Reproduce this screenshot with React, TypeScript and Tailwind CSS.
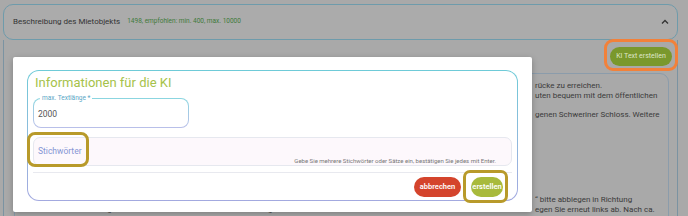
import React from "react";

function PanelLine({ hidden, visible }: { hidden: string; visible: string }) {
  return (
    <div className="whitespace-nowrap h-[9.5px] leading-[9.5px]">
      <span className="inline-block w-[511px] overflow-hidden align-top">{hidden}</span>
      {visible}
    </div>
  );
}

function KiModal() {
  return (
    <div className="absolute left-[13px] top-[57px] w-[519px] h-[155px] bg-white rounded-[2px] shadow-[0_2px_6px_rgba(0,0,0,0.25)] px-[14px] pt-[13px]">
      <div className="rounded-[12px] bg-gradient-to-b from-[#6ecbd8] to-[#a3a9e0] p-px">
        <div className="rounded-[11px] bg-white h-[129px] px-[5px] relative">
          <div className="pl-[2px] pt-[2px] text-[13px] leading-[20px] text-[#a6c24a]">
            Informationen für die KI
          </div>

          <div className="mt-[5px] w-[156px] rounded-[8px] bg-gradient-to-b from-[#8ad6e0] to-[#b9bfe9] p-px relative">
            <div className="rounded-[7px] bg-white h-[28px] flex items-center pl-[4px] pt-[2px] text-[8.5px] text-[#555]">
              2000
            </div>
            <span className="absolute left-[7px] -top-[4px] bg-white px-[2px] text-[6.5px] leading-[8px] text-[#5aa6c6]">
              max. Textlänge *
            </span>
          </div>

          <div className="mt-[9px] h-[29px] rounded-[7px] border border-[#e6e8ef] relative flex items-center px-[4px] bg-[#fdf8fc]">
            <span className="text-[8.5px] text-[#8596d4]">Stichwörter</span>
            <span className="absolute right-[15px] bottom-[0px] text-[6px] leading-[8px] text-[#777]">
              Gebe Sie mehrere Stichwörter oder Sätze ein, bestätigen Sie jedes mit Enter.
            </span>
          </div>

          <div className="mt-[6px] border-t border-[#e8e9ef]" />

          <div className="mt-[4px] flex justify-end gap-[10px] pr-[9px]">
            <button className="h-[20px] w-[47px] rounded-full bg-[#d4442c] text-white text-[7.5px] font-semibold">
              abbrechen
            </button>
            <button className="h-[20px] w-[32px] rounded-full bg-[#a8ba3c] text-white text-[7.5px] font-semibold">
              erstellen
            </button>
          </div>
        </div>
      </div>

      {/* Markierungen */}
      <div className="absolute left-[14px] top-[75px] w-[62px] h-[35px] rounded-[8px] border-[3px] border-[#b89a2a]" />
      <div className="absolute left-[450px] top-[113px] w-[45px] h-[33px] rounded-[7px] border-[3px] border-[#b89a2a]" />
    </div>
  );
}

export default function App() {
  return (
    <div className="w-[688px] h-[216px] overflow-hidden relative bg-[#a9a9a9] font-['Roboto',sans-serif]">
      <div className="ml-[3px] w-[675px] pt-[4px]">
        <div className="h-[36px] rounded-[10px] border border-[#6e9bab] bg-[#ababab] flex items-center pl-[9px] pr-[8px]">
          <span className="text-[8px] text-[#333]">Beschreibung des Mietobjekts</span>
          <span className="ml-[7px] text-[6.5px] text-[#3e7a3a]">1498, empfohlen: min. 400, max. 10000</span>
          <svg className="ml-auto" width="8" height="6" viewBox="0 0 8 6">
            <path d="M1 4.5 L4 1.5 L7 4.5" stroke="#333" strokeWidth="1.3" fill="none" />
          </svg>
        </div>

        <div className="border-x border-[#7b93a2] h-[180px]">
          <div className="flex justify-end pr-[5px] pt-[7px]">
            <div className="relative flex">
              <button className="h-[19px] w-[62px] rounded-full bg-[#7a982c] text-[7px] text-[#dfe6c8]">
                KI Text erstellen
              </button>
              <div className="absolute -left-[6px] -top-[8px] w-[74px] h-[32px] rounded-[9px] border-[3px] border-[#f2813a]" />
            </div>
          </div>

          <div className="mt-[7px] ml-[10px] mr-[8px] h-[160px] rounded-[9px] border border-[#8b9cab] bg-[#a9a9a9] pl-[9px] pt-[7px] text-[8px] text-[#3a3a3a] overflow-hidden">
            <PanelLine hidden="Die Wohnung liegt zentral und ist zu Fuß in wenigen Minuten über die B" visible="rücke zu erreichen." />
            <PanelLine hidden="Die Innenstadt, Einkaufsmöglichkeiten und Restaurants erreichen Sie in wenigen Min" visible="uten bequem mit dem öffentlichen" />
            <PanelLine hidden="" visible="" />
            <PanelLine hidden="Ein besonderes Highlight ist der Blick auf das nahegele" visible="genen Schweriner Schloss. Weitere" />
            <PanelLine hidden="Sehenswürdigkeiten finden Sie in der näheren Umgebung." visible="" />
            <PanelLine hidden="" visible="" />
            <PanelLine hidden="Anfahrt:" visible="" />
            <PanelLine hidden="Von der Autobahn kommend folgen Sie der Beschilderung Richtung Zentrum." visible="" />
            <PanelLine hidden="Nach etwa 2 km erreichen Sie einen Kreisverkehr, diesen an der zweiten" visible="" />
            <PanelLine hidden="Ausfahrt verlassen und der Hauptstraße folgen." visible="" />
            <PanelLine hidden="" visible="" />
            <PanelLine hidden="" visible="" />
            <PanelLine hidden="An der Kreuzung mit der Ampel und dem Schild „Innenstadt“ bitte abbiegen in R" visible="“ bitte abbiegen in Richtung" />
            <PanelLine hidden="Am Ende der Straße biegen Sie links ab und an der nächsten Kreuzung bi" visible="egen Sie erneut links ab. Nach ca." />
          </div>
        </div>
      </div>

      <KiModal />
    </div>
  );
}
